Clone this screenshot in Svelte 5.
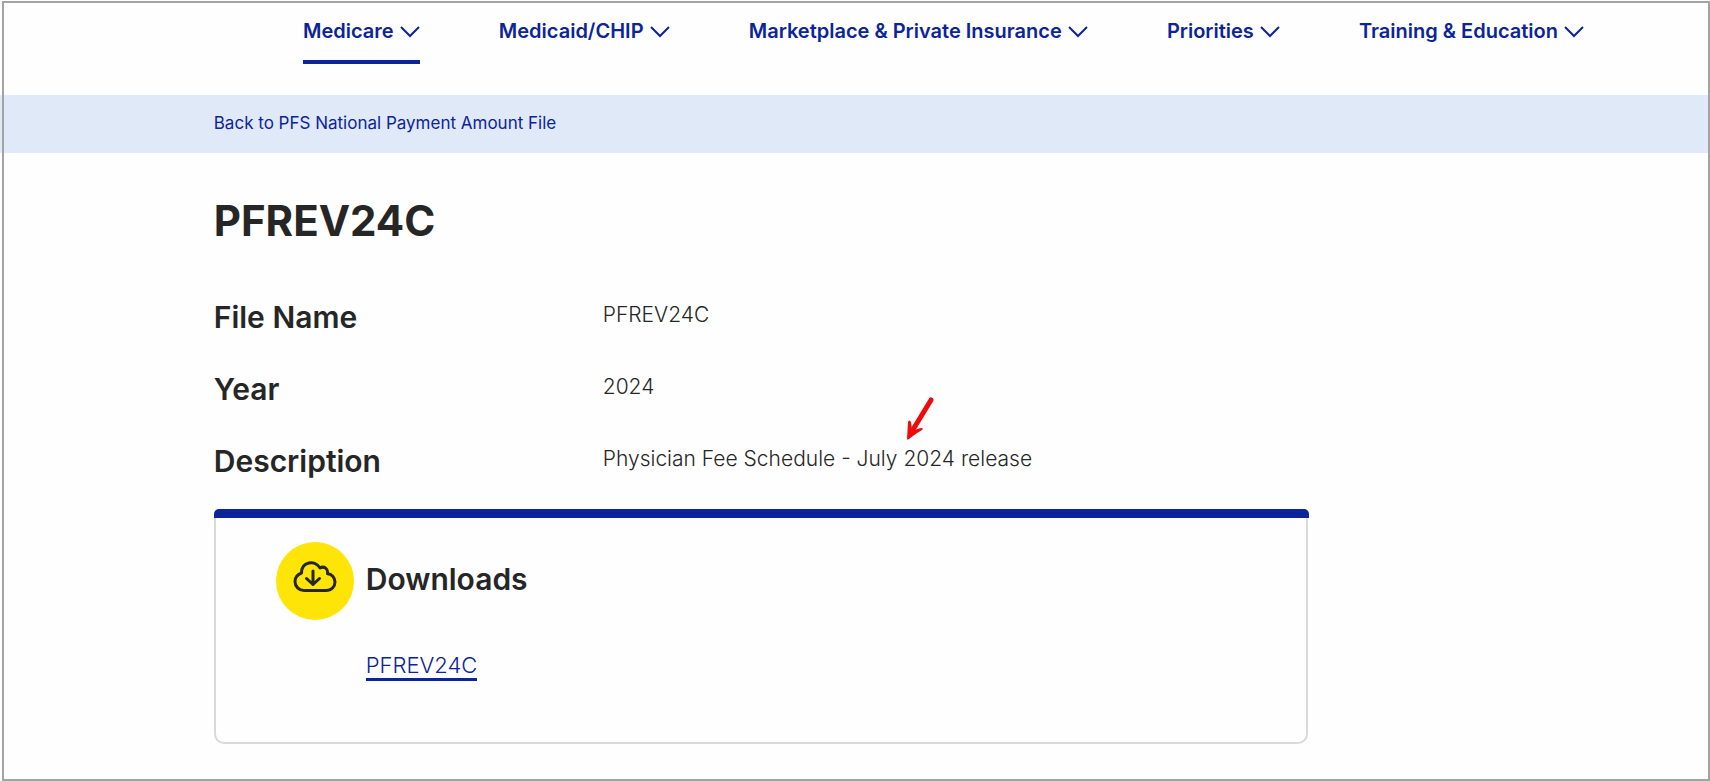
<script>
  const menus = [
    { label: 'Medicare', active: true },
    { label: 'Medicaid/CHIP' },
    { label: 'Marketplace & Private Insurance' },
    { label: 'Priorities' },
    { label: 'Training & Education' }
  ];

  let openMenu = $state(null);

  function toggleMenu(label) {
    openMenu = openMenu === label ? null : label;
  }
</script>

<div class="page">
  <nav class="main-nav" aria-label="Main">
    {#each menus as menu}
      <button
        type="button"
        class="menu"
        class:active={menu.active}
        aria-expanded={openMenu === menu.label}
        onclick={() => toggleMenu(menu.label)}
      >
        {menu.label}
        <svg class="chevron" viewBox="0 0 20 12" aria-hidden="true">
          <path d="M1 1 L10 10 L19 1" />
        </svg>
      </button>
    {/each}
  </nav>

  <div class="back-bar">
    <a href="#back">Back to PFS National Payment Amount File</a>
  </div>

  <main>
    <h1>PFREV24C</h1>

    <dl>
      <dt>File Name</dt>
      <dd>PFREV24C</dd>
      <dt>Year</dt>
      <dd>2024</dd>
      <dt>Description</dt>
      <dd>
        Physician Fee Schedule - July <span class="marked">2024<svg class="arrow" viewBox="0 0 28 44" aria-hidden="true">
            <path class="shaft" d="M25 3 L8 31" />
            <path class="head" d="M1 42 L2 25 Q3 22 5 25 L6 32 L8 33 L15 31 Q18 31 16 33 Q9 37 3 42 Q1 43 1 42 Z" />
          </svg></span> release
      </dd>
    </dl>

    <section class="downloads">
      <div class="downloads-body">
        <div class="downloads-head">
          <span class="badge">
            <svg class="cloud" viewBox="0 0 44 32" aria-hidden="true">
              <path d="M11 29.5 H33 C38.500 29.500 42 25.500 42 21 C42 16.500 38.500 13 34.500 12.800 C35.500 8 31 4.500 27 7 C22 -1.500 8.500 .5 8.500 12 C4.500 13.500 2 17 2 20.500 C2 25.500 6 29.500 11 29.500 Z" />
              <path d="M20 10 V23.500 M13.500 17.500 L20 23.500 L26.500 17.500" />
            </svg>
          </span>
          <h2>Downloads</h2>
        </div>
        <a class="file" href="#pfrev24c">PFREV24C</a>
      </div>
    </section>
  </main>
</div>

<style>
  :global(body) {
    background: #fefefe;
  }

  .page {
    position: relative;
    box-sizing: border-box;
    min-height: 100vh;
    color: #262626;
    font-family: Inter, "Liberation Sans", sans-serif;
  }

  /* thin frame drawn over the whole page */
  .page::after {
    content: '';
    position: absolute;
    inset: 1px 0 0 2px;
    border: 2px solid #a3a3a3;
    pointer-events: none;
  }

  a {
    color: #0c2499;
    text-decoration: none;
  }

  .main-nav {
    display: flex;
    justify-content: space-between;
    padding: 17px 126px 31px 303px;
  }

  .menu {
    display: flex;
    gap: 6px;
    padding: 0 0 15px;
    border: 0;
    border-bottom: 4px solid transparent;
    background: none;
    color: #0c2499;
    font: 600 20px/28px Inter, "Liberation Sans", sans-serif;
    white-space: nowrap;
    cursor: pointer;
  }

  .menu.active {
    border-image: linear-gradient(#0c2499, #0c2499) 4;
  }

  .chevron {
    width: 20px;
    height: 12px;
    margin-top: 9px;
    fill: none;
    stroke: #0c2499;
    stroke-width: 2;
  }

  .back-bar {
    padding: 14px 12.5% 16px;
    background: #e0e9f8;
    font-size: 17px;
    font-weight: 400;
    line-height: 28px;
  }

  main {
    padding: 40px 12.5% 36px;
  }

  h1 {
    margin: 0;
    font-size: 42px;
    font-weight: 700;
    line-height: 56px;
  }

  dl {
    display: grid;
    grid-template-columns: 389px 1fr;
    row-gap: 36px;
    margin: 50px 0 0;
  }

  dt {
    font-size: 30px;
    font-weight: 600;
    line-height: 36px;
  }

  dd {
    margin: 0;
    font-size: 21px;
    font-weight: 300;
    line-height: 32px;
  }

  .marked {
    position: relative;
  }

  .arrow {
    position: absolute;
    left: 3px;
    bottom: 30px;
    width: 28px;
    height: 44px;
    fill: #f00a0a;
  }

  .shaft {
    stroke: #f00a0a;
    stroke-width: 5;
    stroke-linecap: round;
  }

  .downloads {
    max-width: 1095px;
    margin-top: 30px;
  }

  .downloads::before {
    content: '';
    display: block;
    height: 9px;
    border-radius: 5px 5px 0 0;
    background: #0c2499;
  }

  .downloads-body {
    margin-right: 1px;
    padding: 24px 60px 61px;
    border: 2px solid #d9d9d9;
    border-top: 0;
    border-radius: 0 0 10px 10px;
  }

  .downloads-head {
    display: flex;
    gap: 12px;
    align-items: center;
  }

  .badge {
    display: flex;
    justify-content: center;
    width: 78px;
    height: 78px;
    border-radius: 50%;
    background: #ffe407;
  }

  .cloud {
    width: 44px;
    height: 32px;
    margin-top: 19px;
    fill: none;
    stroke: #262626;
    stroke-width: 3;
    stroke-linejoin: round;
    stroke-linecap: round;
  }

  h2 {
    margin: 0;
    padding-bottom: 4px;
    font-size: 30px;
    font-weight: 600;
    line-height: 36px;
  }

  .file {
    display: inline-block;
    margin: 32px 0 0 90px;
    border-bottom: 3px solid #0c2499;
    font-size: 22px;
    font-weight: 300;
    line-height: 26px;
  }
</style>
